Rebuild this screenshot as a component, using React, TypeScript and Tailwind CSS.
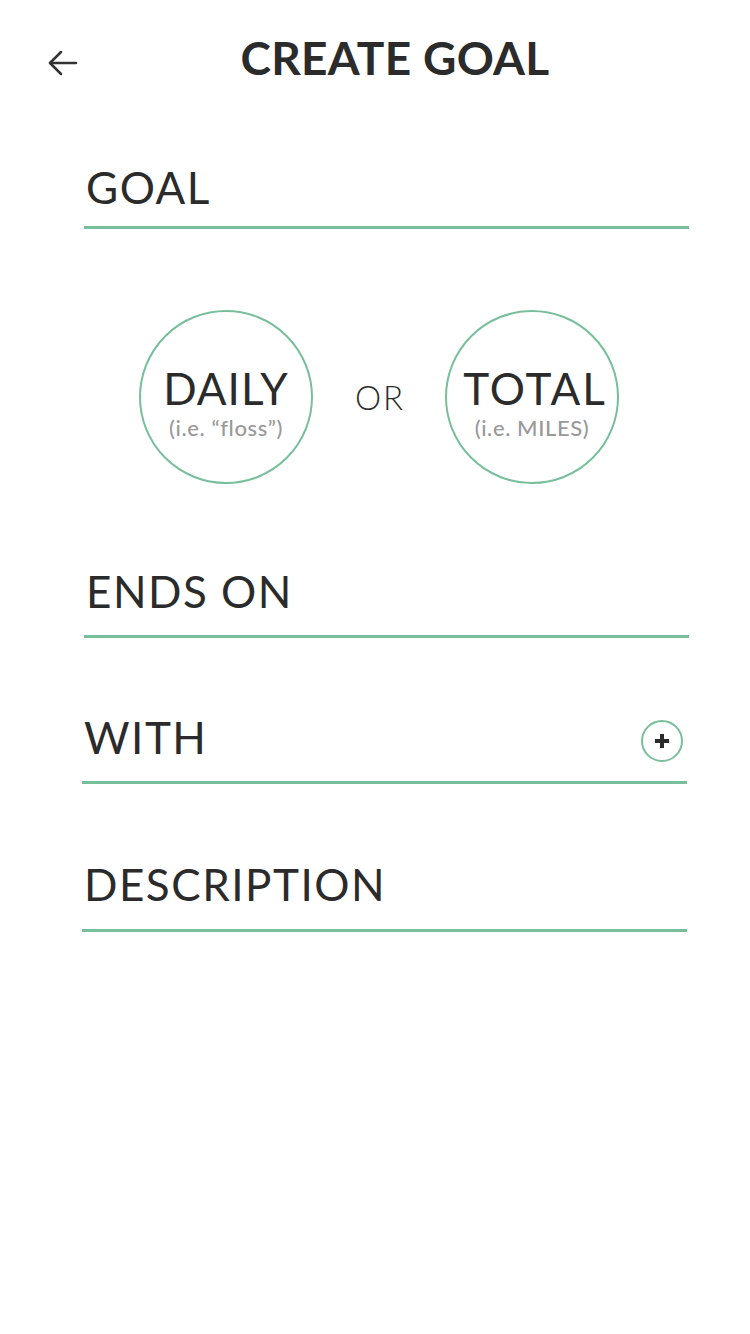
import React from 'react';

function Field({ label, className = '', mt, pb, children }: { label: string; className?: string; mt: string; pb: string; children?: React.ReactNode }) {
  return (
    <div className={`${mt} ${className} w-[605px] border-b-[3px] border-[#77bf9a] ${pb} flex items-center justify-between`}>
      <span className="text-[44px] leading-none pl-[2px] tracking-[1.5px]">{label}</span>
      {children}
    </div>
  );
}

export default function App() {
  return (
    <div className="w-[750px] min-h-[1334px] bg-white text-[#2b2b2b] font-['Lato',sans-serif]">
      {/* Header */}
      <header className="h-[115px] flex items-center pl-[48px] pr-[38px]">
        <svg width="30" height="26" viewBox="0 0 30 26" fill="none" stroke="#333" strokeWidth="2.5" strokeLinecap="round" strokeLinejoin="round" className="mt-[10px]">
          <path d="M2 13h26" />
          <path d="M13 2 2 13l11 11" />
        </svg>
        <h1 className="flex-1 text-center text-[46px] font-bold leading-none tracking-[0.3px]">CREATE GOAL</h1>
      </header>

      <Field label="GOAL" mt="mt-[50px]" pb="pb-[17px]" className="ml-[84px]" />

      {/* Daily / Total */}
      <div className="mt-[81px] flex items-center pl-[139px]">
        <button className="w-[174px] h-[174px] rounded-full border-2 border-[#77bf9a] flex flex-col items-center justify-center pt-[10px]">
          <span className="text-[44px] leading-none tracking-[1px]">DAILY</span>
          <span className="text-[22px] leading-none mt-[7px] text-[#999] font-medium tracking-[0.6px]">(i.e. “floss”)</span>
        </button>
        <span className="w-[132px] text-center text-[33px] font-light leading-none tracking-[2px] pl-[2px]">OR</span>
        <button className="w-[174px] h-[174px] rounded-full border-2 border-[#77bf9a] flex flex-col items-center justify-center pt-[10px]">
          <span className="text-[44px] leading-none tracking-[2px] pl-[6px]">TOTAL</span>
          <span className="text-[22px] leading-none mt-[7px] text-[#999] font-medium tracking-[0.6px]">(i.e. MILES)</span>
        </button>
      </div>

      <Field label="ENDS ON" mt="mt-[85px]" pb="pb-[22px]" className="ml-[84px]" />

      <Field label="WITH" mt="mt-[77px]" pb="pb-[22px]" className="ml-[82px]">
        <div className="mr-[4px] w-[42px] h-[42px] rounded-full border-2 border-[#77bf9a] flex items-center justify-center translate-y-[4px]">
          <svg width="16" height="16" viewBox="0 0 16 16" fill="none" stroke="#2b2b2b" strokeWidth="4">
            <path d="M8 1v14M1 8h14" />
          </svg>
        </div>
      </Field>

      <Field label="DESCRIPTION" mt="mt-[78px]" pb="pb-[23px]" className="ml-[82px]" />
    </div>
  );
}
